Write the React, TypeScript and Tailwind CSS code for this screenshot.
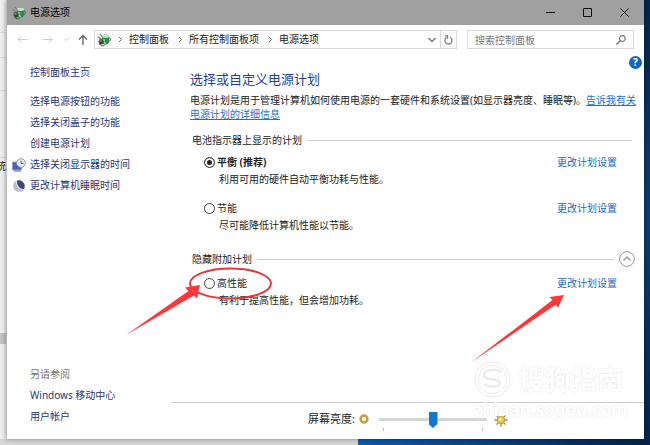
import { useState } from "react";

const sideLinks = [
  { label: "选择电源按钮的功能", icon: "" },
  { label: "选择关闭盖子的功能", icon: "" },
  { label: "创建电源计划", icon: "" },
  { label: "选择关闭显示器的时间", icon: "display" },
  { label: "更改计算机睡眠时间", icon: "sleep" },
];

const crumbs = ["控制面板", "所有控制面板项", "电源选项"];

const PowerIcon = () => (
  <svg width="14" height="14" viewBox="0 0 15 14" className="shrink-0">
    <path d="M3 0.500l3.500 4M0.500 3.500l4.500 2.500" stroke="#778" strokeWidth="1.100" />
    <path d="M5.500 3C6.500 0.500 12 0.500 13 3v6.500c-1 3-5.500 3.500-7.500 1z" fill="#2d8a4b" />
    <ellipse cx="9.300" cy="3" rx="3.800" ry="1.800" fill="#c4e2c4" />
    <path d="M7.500 6v3.500l2 1.500" stroke="#9be09b" strokeWidth="1.500" fill="none" />
    <path d="M13 4.500c2 0 2 4 0 4" stroke="#555" fill="none" />
    <path d="M2 6.500l3-0.500 2.500 2.500-1.500 3-3 0.500L1.500 9z" fill="#35483c" />
    <path d="M2.500 8h2.500" stroke="#d9c96a" />
    <path d="M3 11.500c1 2 3 2 5 1.500" stroke="#444" fill="none" />
  </svg>
);

const DisplayIcon = () => (
  <svg width="14" height="14" viewBox="0 0 14 14">
    <path d="M0.500 4h9v8h-9z" fill="#4a62b8" stroke="#8f9fd0" />
    <path d="M2 13h7" stroke="#8a94b8" strokeWidth="1.500" />
    <circle cx="9" cy="5" r="4.300" fill="#eef1fa" stroke="#8b98bf" />
    <path d="M9 2.500V5.500h2.500" stroke="#55639a" fill="none" />
  </svg>
);

const SleepIcon = () => (
  <svg width="14" height="14" viewBox="0 0 14 14">
    <circle cx="7" cy="7" r="6" fill="#dfe4ec" />
    <path d="M4 1.800A6 6 0 1 0 12 10.500C7 11 3.500 6.500 4 1.800z" fill="#b9c2d1" />
    <path d="M5 1.500A6 6 0 0 1 12 10C8 10.500 4.500 6 5 1.500z" fill="#3c4b72" />
  </svg>
);

const Chevron = () => (
  <svg width="5" height="7" viewBox="0 0 5 7" fill="none" stroke="#666">
    <path d="M1 1l2.500 2.500L1 6" />
  </svg>
);

type PlanProps = {
  id: string;
  name: string;
  desc: string;
  bold?: boolean;
  value: string;
  onPick: (id: string) => void;
};

const Plan = ({ id, name, desc, bold, value, onPick }: PlanProps) => (
  <div className="flex justify-between pl-[14px] pr-[17px]">
    <div>
      <label className="flex items-center gap-[2px] h-4 text-[10px]">
        <input
          type="radio"
          name="plan"
          checked={value === id}
          onChange={() => onPick(id)}
          className="appearance-none w-[11px] h-[11px] rounded-full border border-[#444] bg-white checked:bg-[#222] checked:shadow-[inset_0_0_0_2px_white]"
        />
        <span className={bold ? "font-bold" : ""}>{name}</span>
      </label>
      <p className="pl-[15px] h-[18px] leading-[18px]">{desc}</p>
    </div>
    <a href="#" className="h-4 leading-4 text-[#1a66c8]">
      更改计划设置
    </a>
  </div>
);

const App = () => {
  const [plan, setPlan] = useState("balanced");
  const [brightness, setBrightness] = useState(50);

  return (
    <div className="relative min-h-screen flex flex-col overflow-hidden bg-[#ececec] text-[10px] text-[#222] font-['Noto_Sans','Noto_Sans_CJK_SC',sans-serif]">
      <div className="flex-1 flex">
        {/* page behind the window */}
        <div className="w-[6px] shrink-0 flex flex-col overflow-hidden bg-[#f0f0f0]">
          <div className="h-[33px] border-b border-[#ddd]" />
          <div className="h-[25px] border-b border-[#ddd]" />
          <div className="h-[33px] border-b border-[#ddd]" />
          <div className="h-[67px] border-b border-[#ddd]" />
          <div className="flex justify-end h-4 leading-4">统</div>
          <div className="h-[159px]" />
          <div className="h-[11px] bg-[#c4c4c4]" />
        </div>

        <div className="flex-1 min-w-0 flex flex-col bg-white border-l border-[#bbb] z-10 shadow-[0_0_5px_rgba(0,0,0,0.4)]">
          <header className="flex items-center h-[25px] pl-[5px] pr-px bg-[#a0a0a0]">
            <PowerIcon />
            <h1 className="flex-1 pl-1 text-black">电源选项</h1>
            <button aria-label="最小化" className="w-[37px] h-full flex items-center justify-center">
              <svg width="9" height="9" viewBox="0 0 9 9" stroke="#111">
                <path d="M0 4.500h9" />
              </svg>
            </button>
            <button aria-label="最大化" className="w-[37px] h-full flex items-center justify-center">
              <svg width="9" height="9" viewBox="0 0 9 9" stroke="#111" fill="none">
                <path d="M0.500 0.500h8v8h-8z" />
              </svg>
            </button>
            <button aria-label="关闭" className="w-[37px] h-full flex items-center justify-center">
              <svg width="9" height="9" viewBox="0 0 9 9" stroke="#111">
                <path d="M0.500 0.500l8 8M8.500 0.500l-8 8" />
              </svg>
            </button>
          </header>

          <nav className="flex items-center h-[29px] pl-[10px] pr-[10px]">
            <button aria-label="后退" className="w-[25px]">
              <svg width="11" height="9" viewBox="0 0 11 9" fill="none" stroke="#ccc">
                <path d="M10.500 4.500H1M4.500 1L1 4.500 4.500 8" />
              </svg>
            </button>
            <button aria-label="前进" className="w-[22px]">
              <svg width="11" height="9" viewBox="0 0 11 9" fill="none" stroke="#ccc">
                <path d="M0.500 4.500H10M6.500 1L10 4.500 6.500 8" />
              </svg>
            </button>
            <button aria-label="最近浏览" className="w-[14px]">
              <svg width="5" height="4" viewBox="0 0 5 4" fill="none" stroke="#ccc">
                <path d="M0.500 0.500l2 2 2-2" />
              </svg>
            </button>
            <button aria-label="上移" className="w-4">
              <svg width="10" height="11" viewBox="0 0 10 11" fill="none" stroke="#666" strokeWidth="1.400">
                <path d="M5 11V1.500M1 5.500l4-4 4 4" />
              </svg>
            </button>
            <div className="flex-1 flex items-center h-[19px] pl-[2px] border border-[#d9d9d9] text-[#222]">
              <PowerIcon />
              {crumbs.map((crumb) => (
                <div key={crumb} className="flex items-center">
                  <span className="w-[18px] flex justify-center">
                    <Chevron />
                  </span>
                  <a href="#" className="pr-[2px]">
                    {crumb}
                  </a>
                </div>
              ))}
              <button aria-label="历史记录" className="ml-auto w-[17px] flex justify-center">
                <svg width="8" height="6" viewBox="0 0 8 6" fill="none" stroke="#777" strokeWidth="1.500">
                  <path d="M0.500 1L4 4.500 7.500 1" />
                </svg>
              </button>
              <button aria-label="刷新" className="w-4 h-full flex items-center justify-center border-l border-[#d9d9d9]">
                <svg width="9" height="10" viewBox="0 0 9 10" fill="none" stroke="#777" strokeWidth="1.200">
                  <path d="M6 2.200A3.600 3.600 0 1 1 2.500 2.400M1 0.800h2.500v3" />
                </svg>
              </button>
            </div>
            <div className="ml-[10px] w-[167px] flex items-center h-[19px] pl-[7px] pr-[7px] border border-[#d9d9d9]">
              <input
                type="text"
                aria-label="搜索控制面板"
                placeholder="搜索控制面板"
                className="flex-1 min-w-0 h-4 outline-none placeholder:text-[#777]"
              />
              <svg width="10" height="10" viewBox="0 0 10 10" fill="none" stroke="#777" strokeWidth="1.200">
                <circle cx="6.300" cy="3.600" r="2.900" />
                <path d="M4.200 5.700L0.500 9.400" strokeWidth="1.500" />
              </svg>
            </div>
          </nav>

          <div className="flex-1 flex">
            <aside className="w-[165px] shrink-0 flex flex-col justify-between pl-[3px] pt-2 pb-3 text-[#2a3575]">
              <div>
                <a href="#" className="block pl-5 h-[21px] leading-[21px]">
                  控制面板主页
                </a>
                <ul className="pt-2">
                  {sideLinks.map((link) => (
                    <li key={link.label} className="flex items-center h-[21px]">
                      <span className="w-5 pl-[2px]">
                        {link.icon === "display" && <DisplayIcon />}
                        {link.icon === "sleep" && <SleepIcon />}
                      </span>
                      <a href="#">{link.label}</a>
                    </li>
                  ))}
                </ul>
              </div>
              <div className="pl-5 leading-[21px]">
                <p className="text-[#777]">另请参阅</p>
                <a href="#" className="block">
                  Windows 移动中心
                </a>
                <a href="#" className="block">
                  用户帐户
                </a>
              </div>
            </aside>

            <main className="flex-1 min-w-0 flex flex-col">
              <div className="flex justify-end h-4 pr-[2px] pt-[2px]">
                <button aria-label="帮助" className="w-[13px] h-[13px] rounded-full bg-[#1565c0] text-white text-[10px] leading-[13px] font-bold">
                  ?
                </button>
              </div>
              <div className="flex-1 pl-[18px] pr-[6px]">
                <h2 className="h-[23px] leading-[19px] text-[13px] text-[#1f3f9c]">选择或自定义电源计划</h2>
                <p className="leading-[14px]">
                  电源计划是用于管理计算机如何使用电源的一套硬件和系统设置(如显示器亮度、睡眠等)。
                  <a href="#" className="text-[#1a73d0] underline">
                    告诉我有关电源计划的详细信息
                  </a>
                </p>

                <div className="flex items-center gap-[5px] h-4 mt-[11px] pl-[2px] pr-[6px]">
                  <h3>电池指示器上显示的计划</h3>
                  <div className="flex-1 border-t border-[#ccc]" />
                </div>
                <div className="flex flex-col gap-3 pt-[6px] pr-1">
                  <Plan
                    id="balanced"
                    name="平衡 (推荐)"
                    desc="利用可用的硬件自动平衡功耗与性能。"
                    bold
                    value={plan}
                    onPick={setPlan}
                  />
                  <Plan
                    id="saver"
                    name="节能"
                    desc="尽可能降低计算机性能以节能。"
                    value={plan}
                    onPick={setPlan}
                  />
                </div>

                <div className="flex items-center gap-[5px] h-4 mt-[17px] pl-[2px] pr-[3px]">
                  <h3>隐藏附加计划</h3>
                  <div className="flex-1 border-t border-[#ccc]" />
                  <button aria-label="隐藏附加计划">
                    <svg width="16" height="16" viewBox="0 0 16 16" fill="none" stroke="#999">
                      <circle cx="8" cy="8" r="7.400" />
                      <path d="M4.500 9.500L8 6l3.500 3.500" strokeWidth="1.500" />
                    </svg>
                  </button>
                </div>
                <div className="pt-2 pr-1">
                  <Plan
                    id="high"
                    name="高性能"
                    desc="有利于提高性能，但会增加功耗。"
                    value={plan}
                    onPick={setPlan}
                  />
                </div>
              </div>

              <div className="flex items-center h-[37px] pl-[136px] border-t border-[#ccc]">
                <label htmlFor="brightness" className="w-[50px] text-[11px] pb-1">
                  屏幕亮度:
                </label>
                <svg width="12" height="12" viewBox="0 0 12 12" className="mb-1">
                  <circle cx="6" cy="6" r="3.500" fill="#fff6cf" stroke="#c79a3c" strokeWidth="2.400" />
                </svg>
                <div className="ml-[9px] w-[108px]">
                  <input
                    id="brightness"
                    type="range"
                    value={brightness}
                    onChange={(e) => setBrightness(Number(e.target.value))}
                    className="block w-full h-4 appearance-none bg-transparent [&::-webkit-slider-runnable-track]:h-[3px] [&::-webkit-slider-runnable-track]:bg-[#d4d4d4] [&::-webkit-slider-thumb]:appearance-none [&::-webkit-slider-thumb]:w-[9px] [&::-webkit-slider-thumb]:h-4 [&::-webkit-slider-thumb]:-mt-[6px] [&::-webkit-slider-thumb]:bg-[#0f78d4] [&::-webkit-slider-thumb]:[clip-path:polygon(0_0,100%_0,100%_75%,50%_100%,0_75%)]"
                  />
                  <div className="flex justify-between px-1">
                    <span className="w-px h-[3px] bg-[#bbb]" />
                    <span className="w-px h-[3px] bg-[#bbb]" />
                  </div>
                </div>
                <svg width="14" height="14" viewBox="0 0 14 14" className="ml-[7px] mb-[3px]">
                  <path
                    d="M7 0.500v13M0.500 7h13M2.400 2.400l9.200 9.200M11.600 2.400l-9.200 9.200"
                    stroke="#a9842c"
                    strokeWidth="1.300"
                  />
                  <circle cx="7" cy="7" r="3.800" fill="#e5c650" stroke="#b9942f" strokeWidth="0.800" />
                  <circle cx="6.300" cy="6.200" r="1.500" fill="#fff3b0" />
                </svg>
              </div>
            </main>
          </div>
        </div>

        <div className="w-[6px] shrink-0 bg-linear-to-b from-[#06234a] via-[#0b3d78] to-[#03244c]" />
      </div>

      <div className="flex h-[6px]">
        <div className="w-[55%] bg-[#d6d6d6]" />
        <div className="flex-1 bg-linear-to-r from-[#0a5cae] to-[#03234a]" />
      </div>

      {/* watermark */}
      <div className="absolute z-20 left-[474px] top-[360px] pointer-events-none text-white [text-shadow:0_0_2px_#ddd]">
        <div className="flex items-center gap-2 h-[38px]">
          <svg width="37" height="37" viewBox="0 0 37 37" fill="none" stroke="#ebebeb">
            <circle cx="18.500" cy="18.500" r="17.500" />
            <circle cx="18.500" cy="18.500" r="14" />
            <path d="M27 11c-6-4-17-2-17 3 0 6 16 3 16 8 0 4-10 5-16 1" strokeWidth="2.500" />
          </svg>
          <span className="text-[26px] leading-[38px] font-bold">搜狗指南</span>
        </div>
        <p className="text-[17px] leading-6 font-bold">zhinan.sogou.com</p>
      </div>

      {/* callouts */}
      <svg width="650" height="445" viewBox="0 0 650 445" className="absolute z-20 left-0 top-0 pointer-events-none">
        <ellipse cx="230.500" cy="283.500" rx="40.500" ry="15" fill="none" stroke="#e5383b" strokeWidth="2" />
        <path d="M200 285L185 287.500 188.500 291 126 335 194 295.500 197 298.500z" fill="#fa3a3a" />
        <path d="M564 295L549.500 297 552.500 300 471 362.500 556 304.500 558 308z" fill="#fa3a3a" />
      </svg>
    </div>
  );
};

export default App;
